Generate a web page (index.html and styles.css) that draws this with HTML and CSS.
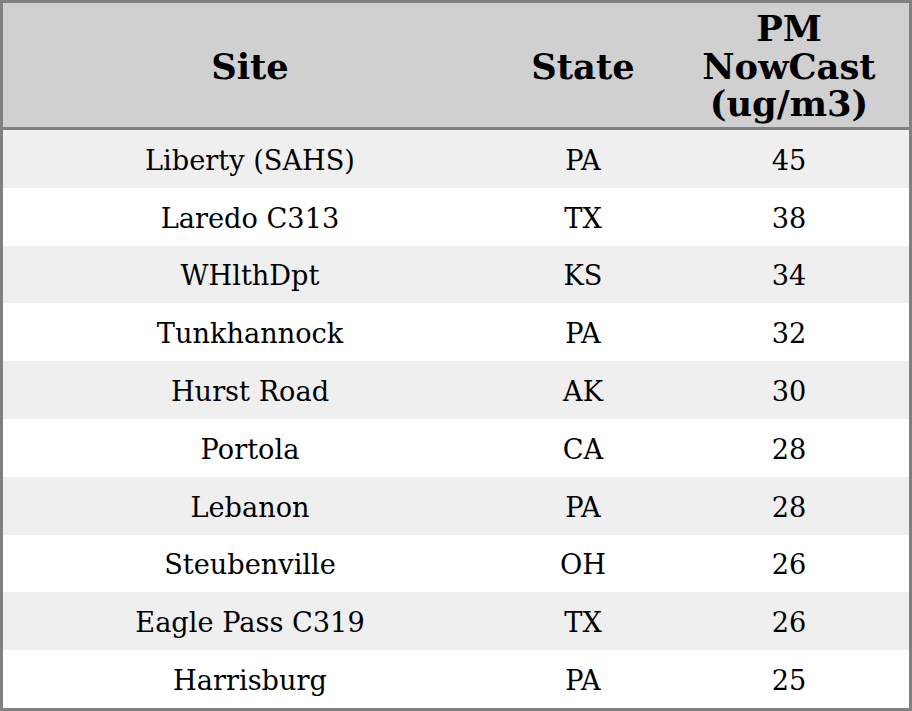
FILE: index.html
```html
<!DOCTYPE html>
<html>
<head>
<meta charset="utf-8">
<link rel="stylesheet" href="styles.css">
</head>
<body>
<div class="grid" role="table">
  <div class="row head" role="row"><div class="cell">Site</div><div class="cell">State</div><div class="cell">PM<br>NowCast<br>(ug/m3)</div></div>
  <div class="row odd" role="row"><div class="cell">Liberty (SAHS)</div><div class="cell">PA</div><div class="cell">45</div></div>
  <div class="row" role="row"><div class="cell">Laredo C313</div><div class="cell">TX</div><div class="cell">38</div></div>
  <div class="row odd" role="row"><div class="cell">WHlthDpt</div><div class="cell">KS</div><div class="cell">34</div></div>
  <div class="row" role="row"><div class="cell">Tunkhannock</div><div class="cell">PA</div><div class="cell">32</div></div>
  <div class="row odd" role="row"><div class="cell">Hurst Road</div><div class="cell">AK</div><div class="cell">30</div></div>
  <div class="row" role="row"><div class="cell">Portola</div><div class="cell">CA</div><div class="cell">28</div></div>
  <div class="row odd" role="row"><div class="cell">Lebanon</div><div class="cell">PA</div><div class="cell">28</div></div>
  <div class="row" role="row"><div class="cell">Steubenville</div><div class="cell">OH</div><div class="cell">26</div></div>
  <div class="row odd" role="row"><div class="cell">Eagle Pass C319</div><div class="cell">TX</div><div class="cell">26</div></div>
  <div class="row" role="row"><div class="cell">Harrisburg</div><div class="cell">PA</div><div class="cell">25</div></div>
</div>
</body>
</html>
```
FILE: styles.css
```css
html, body {
  margin: 0;
  padding: 0;
  background: #ffffff;
}
.grid {
  width: 912px;
  height: 711px;
  box-sizing: border-box;
  border: 3px solid #808080;
  display: grid;
  grid-template-rows: 127px repeat(10, 1fr);
  font-family: "DejaVu Serif", serif;
  color: #000;
}
.row {
  display: grid;
  grid-template-columns: 494px 172px 240px;
  background: #ffffff;
}
.row.odd { background: #efefef; }
.cell {
  display: flex;
  align-items: center;
  justify-content: center;
  text-align: center;
  font-size: 27.2px;
  line-height: 32px;
  padding-top: 4px;
}
.head {
  background: #d0d0d0;
  border-bottom: 3px solid #808080;
}
.head .cell {
  font-size: 35.3px;
  font-weight: bold;
  line-height: 37.5px;
  padding-top: 3px;
}
```
